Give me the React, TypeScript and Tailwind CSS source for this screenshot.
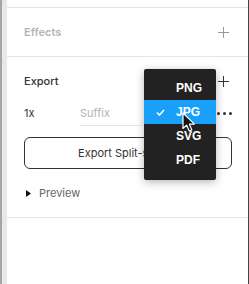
import React from "react";

const formats = ["PNG", "JPG", "SVG", "PDF"];

function Plus({ color }: { color: string }) {
  return (
    <svg width="11" height="11" viewBox="0 0 11 11" fill="none">
      <path d="M5.5 0v11M0 5.5h11" stroke={color} strokeWidth="1" />
    </svg>
  );
}

function Cursor() {
  return (
    <svg width="14" height="20" viewBox="0 0 14 20">
      <path
        d="M1 1v15.5l3.6-3.4 2.6 5.9 2.6-1.1-2.5-5.8h5.1z"
        fill="#111"
        stroke="#fff"
        strokeWidth="1.2"
        strokeLinejoin="round"
      />
    </svg>
  );
}

export default function App() {
  const selected = "JPG";

  return (
    <div className="flex w-[249px] h-[284px] bg-white overflow-hidden font-['Inter',sans-serif] text-[11px]">
      <div className="w-[2px] bg-[#a6a6a6]" />
      <div className="w-[5px] bg-[#e8e8e8]" />

      <div className="relative flex-1 flex flex-col">
        <div className="h-[8px] border-b border-[#e5e5e5]" />

        <div className="h-[49px] border-b border-[#e5e5e5] flex items-center justify-between pl-[17px] pr-[19px]">
          <span className="font-semibold text-[#b3b3b3]">Effects</span>
          <Plus color="#999" />
        </div>

        <div className="border-b border-[#e5e5e5] pb-[12px]">
          <div className="h-[48px] flex items-center justify-between pl-[17px] pr-[19px]">
            <span className="font-medium text-[#333]">Export</span>
            <Plus color="#333" />
          </div>

          <div className="h-[22px] flex items-start pl-[17px] pr-[16px]">
            <span className="w-[56px] leading-[16px] text-[#333]">1x</span>
            <div className="w-[62px] h-[21px] border-b border-[#e5e5e5] leading-[16px] text-[#b3b3b3]">Suffix</div>
            <div className="ml-auto h-[16px] flex items-center gap-[3px]">
              <span className="w-[3px] h-[3px] rounded-full bg-[#333]" />
              <span className="w-[3px] h-[3px] rounded-full bg-[#333]" />
              <span className="w-[3px] h-[3px] rounded-full bg-[#333]" />
            </div>
          </div>

          <div className="mt-[10px] ml-[17px] mr-[16px] h-[32px] rounded-[6px] border border-[#333] flex items-center justify-center text-[#333]">
            Export Split-screen
          </div>

          <div className="mt-[12px] h-[24px] flex items-center pl-[19px] gap-[8px] text-[#666]">
            <svg width="5" height="7" viewBox="0 0 5 7">
              <path d="M0 0l5 3.5-5 3.5z" fill="#111" />
            </svg>
            <span>Preview</span>
          </div>
        </div>

        <div className="absolute left-[137px] top-[69px] w-[72px] py-[7px] pb-[8px] rounded-[2px] bg-[#222] shadow-[0_2px_8px_rgba(0,0,0,0.3)] font-['Liberation_Sans',Arial,sans-serif] text-[12px] font-bold text-white">
          {formats.map((f) => (
            <div
              key={f}
              className={
                "relative h-[24px] flex items-center pl-[32px] " +
                (f === selected ? "bg-[#18a0fb]" : "")
              }
            >
              {f === selected && (
                <svg className="absolute left-[12px] top-[9px]" width="9" height="7" viewBox="0 0 9 7" fill="none">
                  <path d="M1 3.5l2.5 2.5L8 1" stroke="#fff" strokeWidth="1.6" />
                </svg>
              )}
              {f}
            </div>
          ))}
        </div>

        <div className="absolute left-[175px] top-[112px]">
          <Cursor />
        </div>
      </div>

      <div className="w-[1px] bg-[#444]" />
    </div>
  );
}
